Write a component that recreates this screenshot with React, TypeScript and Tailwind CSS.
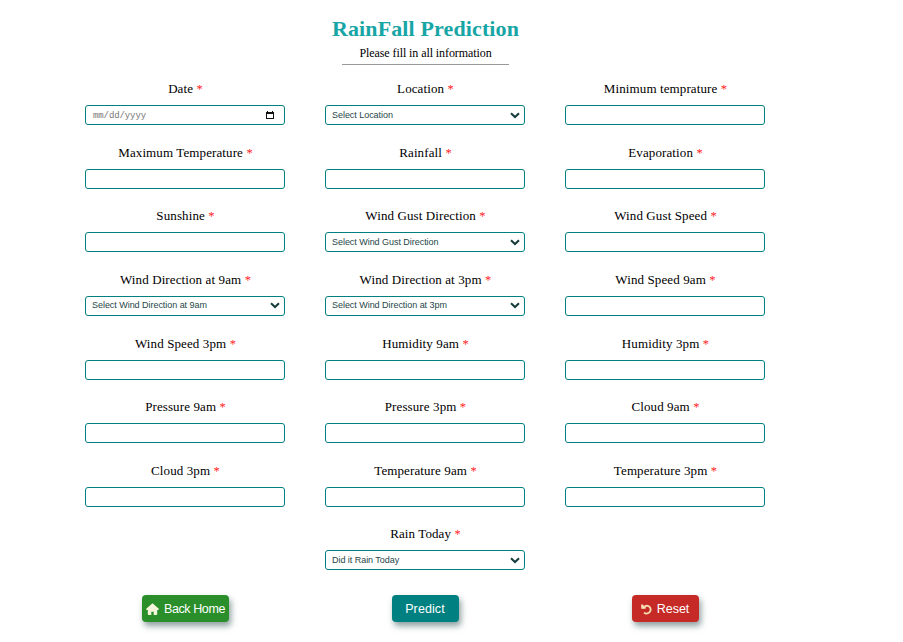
import React from "react";

type Field = { label: string; kind?: "date" | "select"; text?: string };

const rows: Field[][] = [
  [{ label: "Date", kind: "date", text: "mm/dd/yyyy" }, { label: "Location", kind: "select", text: "Select Location" }, { label: "Minimum temprature" }],
  [{ label: "Maximum Temperature" }, { label: "Rainfall" }, { label: "Evaporation" }],
  [{ label: "Sunshine" }, { label: "Wind Gust Direction", kind: "select", text: "Select Wind Gust Direction" }, { label: "Wind Gust Speed" }],
  [
    { label: "Wind Direction at 9am", kind: "select", text: "Select Wind Direction at 9am" },
    { label: "Wind Direction at 3pm", kind: "select", text: "Select Wind Direction at 3pm" },
    { label: "Wind Speed 9am" },
  ],
  [{ label: "Wind Speed 3pm" }, { label: "Humidity 9am" }, { label: "Humidity 3pm" }],
  [{ label: "Pressure 9am" }, { label: "Pressure 3pm" }, { label: "Cloud 9am" }],
  [{ label: "Cloud 3pm" }, { label: "Temperature 9am" }, { label: "Temperature 3pm" }],
  [{ label: "Rain Today", kind: "select", text: "Did it Rain Today" }],
];

function HomeIcon() {
  return (
    <svg width="13" height="12" viewBox="0 0 13 12" fill="#f5f5dc">
      <path d="M6.5 0.2L12.8 5.7Q13 6.8 12.2 6.9H11.2V11Q11.2 12 10.2 12H7.7V8.8H5.3V12H2.8Q1.8 12 1.8 11V6.9H0.8Q0 6.8 0.2 5.7Z" />
    </svg>
  );
}

function ResetIcon() {
  return (
    <svg width="11" height="11" viewBox="0 0 11 11" fill="none" stroke="#f5deb3" strokeWidth="1.8">
      <path d="M1.4 3.6H3.2C4 2 5 1.6 6 1.6A4 4 0 1 1 3 8.6" />
      <path d="M0.2 0.6V4.8H4.6V3.4L1.8 0.6Z" fill="#f5deb3" stroke="none" />
    </svg>
  );
}

function FieldBox({ field }: { field: Field }) {
  return (
    <div className="flex h-[63.63px] w-[200px] flex-col items-center">
      <div className="mb-[8px] h-4 whitespace-nowrap pl-px text-[13px] leading-4 tracking-[0.11px]">
        {field.label} <span className="text-[12.5px] text-[#ff1a1a]">*</span>
      </div>
      <div className="flex h-5 w-full items-center justify-between rounded-[3px] border border-[#008080] bg-white pl-[6px]">
        {field.kind === "date" && (
          <>
            <span className="pl-[1px] pt-[2px] font-['Liberation_Mono',monospace] text-[9px] leading-none tracking-[-0.1px] text-[#757575]">{field.text}</span>
            <svg width="8" height="8" viewBox="0 0 8 8" className="mr-[10px]" shapeRendering="crispEdges">
              <path d="M0 1H1V0H2V1H6V0H7V1H8V8H0ZM1 3V7H7V3Z" fill="#111" fillRule="evenodd" />
            </svg>
          </>
        )}
        {field.kind === "select" && (
          <>
            <span className="font-['Liberation_Sans',Arial,sans-serif] text-[9px] leading-none tracking-[-0.04px] text-[#264646]">{field.text}</span>
            <svg width="10" height="7" viewBox="0 0 10 7" className="mr-[4px]">
              <path d="M1 1.2L5 5L9 1.2" fill="none" stroke="#173b3b" strokeWidth="2" />
            </svg>
          </>
        )}
      </div>
    </div>
  );
}

const button =
  "flex h-[27px] items-center justify-center whitespace-nowrap rounded-[4px] pt-px font-['Liberation_Sans',Arial,sans-serif] leading-none text-white shadow-[2px_4px_6px_rgba(47,79,79,0.55)]";

export default function App() {
  return (
    <main className="h-[642px] w-[903px] overflow-hidden bg-white font-['Liberation_Serif','Times_New_Roman',serif] text-black">
      <div className="flex w-[850px] flex-col items-center pt-[16px]">
        <h1 className="h-[26px] whitespace-nowrap pl-px text-[22px] font-bold leading-[26px] tracking-[0.13px] text-[#18a5a5]">RainFall Prediction</h1>
        <p className="mt-[3px] h-4 whitespace-nowrap pl-px text-[12px] leading-4 tracking-[-0.08px]">Please fill in all information</p>
        <div className="mt-[3px] h-px w-[167px] bg-[#999]" />
        <form className="mt-[16px] flex flex-col">
          {rows.map((row, i) => (
            <div key={i} className="flex justify-center gap-10">
              {row.map((field) => (
                <FieldBox key={field.label} field={field} />
              ))}
            </div>
          ))}
          <div className="mt-[5px] flex gap-10">
            <div className="flex w-[200px] justify-center pl-px">
              <button type="button" className={`${button} w-[87px] gap-[5px] bg-[#2a8f2a] text-[12.5px] tracking-[-0.4px]`}>
                <HomeIcon />
                Back Home
              </button>
            </div>
            <div className="flex w-[200px] justify-center">
              <button type="button" className={`${button} w-[67px] bg-[#008080] text-[12.5px] tracking-[0.1px]`}>Predict</button>
            </div>
            <div className="flex w-[200px] justify-center">
              <button type="button" className={`${button} w-[67px] gap-[5px] bg-[#c62a26] text-[12.5px]`}>
                <ResetIcon />
                Reset
              </button>
            </div>
          </div>
        </form>
      </div>
    </main>
  );
}
